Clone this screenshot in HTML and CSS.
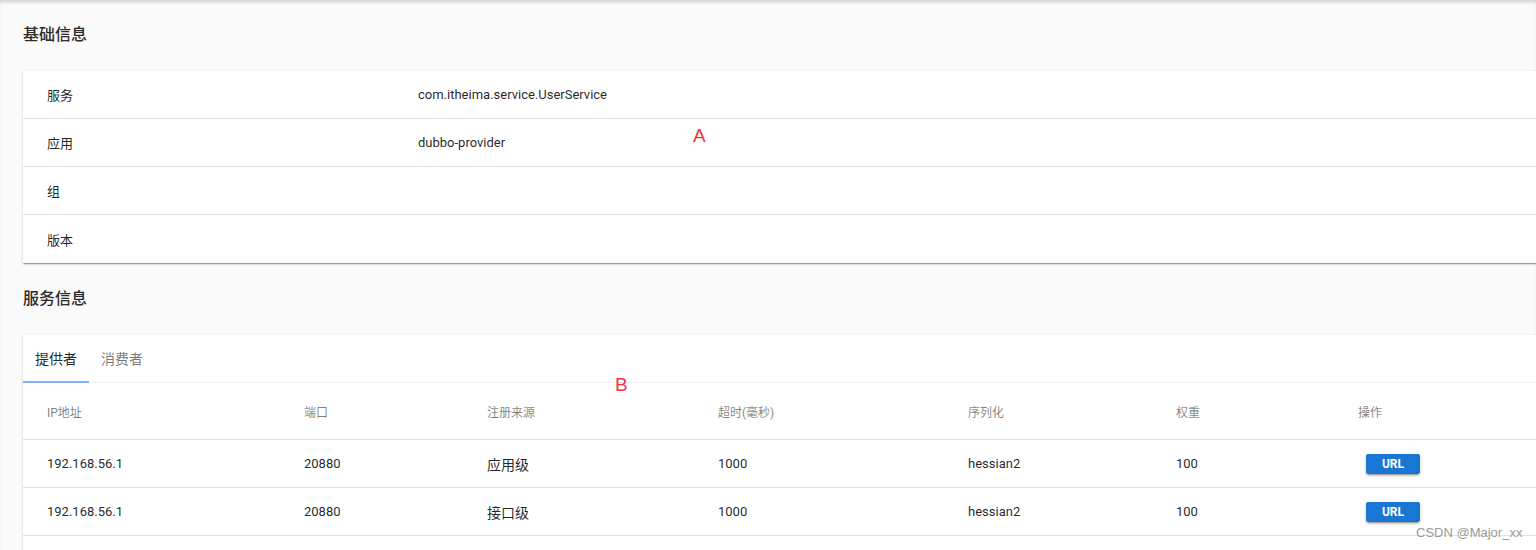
FILE: index.html
```html
<!DOCTYPE html>
<html lang="zh-CN">
<head>
<meta charset="utf-8">
<title>服务详情</title>
<link rel="stylesheet" href="styles.css">
</head>
<body>
<div class="page">
  <h2 class="heading">基础信息</h2>
  <div class="card">
    <div class="info-row"><div class="info-label">服务</div><div class="info-value">com.itheima.service.UserService</div></div>
    <div class="info-row"><div class="info-label">应用</div><div class="info-value">dubbo-provider</div></div>
    <div class="info-row"><div class="info-label">组</div><div class="info-value"></div></div>
    <div class="info-row"><div class="info-label">版本</div><div class="info-value"></div></div>
  </div>

  <h2 class="heading heading-next">服务信息</h2>
  <div class="card">
    <div class="tabs">
      <div class="tab active">提供者</div>
      <div class="tab">消费者</div>
    </div>
    <div class="table">
      <div class="tr thead">
        <div class="td">IP地址</div>
        <div class="td">端口</div>
        <div class="td">注册来源</div>
        <div class="td">超时(毫秒)</div>
        <div class="td">序列化</div>
        <div class="td">权重</div>
        <div class="td">操作</div>
      </div>
      <div class="tr">
        <div class="td">192.168.56.1</div>
        <div class="td">20880</div>
        <div class="td cjk">应用级</div>
        <div class="td">1000</div>
        <div class="td">hessian2</div>
        <div class="td">100</div>
        <div class="td"><button class="btn">URL</button></div>
      </div>
      <div class="tr">
        <div class="td">192.168.56.1</div>
        <div class="td">20880</div>
        <div class="td cjk">接口级</div>
        <div class="td">1000</div>
        <div class="td">hessian2</div>
        <div class="td">100</div>
        <div class="td"><button class="btn">URL</button></div>
      </div>
      <div class="tr">
        <div class="td"></div>
      </div>
    </div>
  </div>

  <span class="mark mark-a">A</span>
  <span class="mark mark-b">B</span>
  <span class="watermark">CSDN @Major_xx</span>
</div>
</body>
</html>
```

FILE: styles.css
```css
* { box-sizing: border-box; }

html, body {
  margin: 0;
  padding: 0;
  height: 100%;
  overflow: hidden;
  background: #fafafa;
}

body {
  font-family: Roboto, "Noto Sans CJK SC", "Noto Sans", sans-serif;
  color: rgba(0, 0, 0, 0.87);
  font-size: 13px;
}

.page {
  position: relative;
  min-height: 100%;
  padding: 0 0 0 23px;
  box-shadow: inset 0 4px 4px -2px rgba(0, 0, 0, 0.18);
}

.heading {
  margin: 0;
  padding: 23px 0 24px;
  font-size: 16px;
  line-height: 24px;
  font-weight: 500;
  color: #2b2b2b;
}

.heading-next { padding: 24px 0 24px; }

.card {
  background: #fff;
  margin-right: -40px;
  box-shadow: 0 2px 1px -1px rgba(0, 0, 0, 0.2), 0 1px 1px 0 rgba(0, 0, 0, 0.14), 0 1px 3px 0 rgba(0, 0, 0, 0.12);
}

.info-row {
  display: grid;
  grid-template-columns: 395px 1fr;
  height: 48px;
  align-items: center;
  border-bottom: 1px solid #e0e0e0;
}

.info-row:last-child { border-bottom: none; }

.info-label { padding-left: 24px; }

.tabs {
  display: flex;
  height: 48px;
  border-bottom: 1px solid #f3f3f3;
}

.tab {
  padding: 0 12px;
  font-size: 14px;
  line-height: 48px;
  color: rgba(0, 0, 0, 0.54);
  position: relative;
}

.tab.active { color: rgba(0, 0, 0, 0.87); }

.tab.active::after {
  content: "";
  position: absolute;
  left: 0;
  right: 0;
  bottom: -1px;
  height: 2px;
  background: #82b1ff;
}

.tr {
  display: grid;
  grid-template-columns: 257px 183px 231px 250px 208px 182px 1fr;
  height: 48px;
  align-items: center;
  border-bottom: 1px solid #e0e0e0;
}

.tr.thead {
  height: 57px;
  font-size: 12px;
  color: rgba(0, 0, 0, 0.5);
}

.td { padding: 0 24px; white-space: nowrap; }

.cjk { font-size: 14px; }

.btn {
  margin-left: 8px;
  width: 54px;
  height: 20px;
  border: none;
  border-radius: 2px;
  background: #1976d2;
  color: #fff;
  font-family: Roboto, sans-serif;
  font-size: 12px;
  font-weight: 700;
  padding: 0;
  box-shadow: 0 3px 1px -2px rgba(0, 0, 0, 0.2), 0 2px 2px 0 rgba(0, 0, 0, 0.14), 0 1px 5px 0 rgba(0, 0, 0, 0.12);
}

.mark {
  position: absolute;
  color: #f4333c;
  font-family: "Liberation Sans", Arial, sans-serif;
  font-size: 19px;
  line-height: 1;
}

.mark-a { left: 693px; top: 126px; }
.mark-b { left: 615px; top: 375px; }

.watermark {
  position: absolute;
  left: 1416px;
  top: 525px;
  font-family: "Liberation Sans", Arial, sans-serif;
  font-size: 13px;
  color: #9a9a9a;
  text-shadow: 0 0 2px #fff;
}
```
